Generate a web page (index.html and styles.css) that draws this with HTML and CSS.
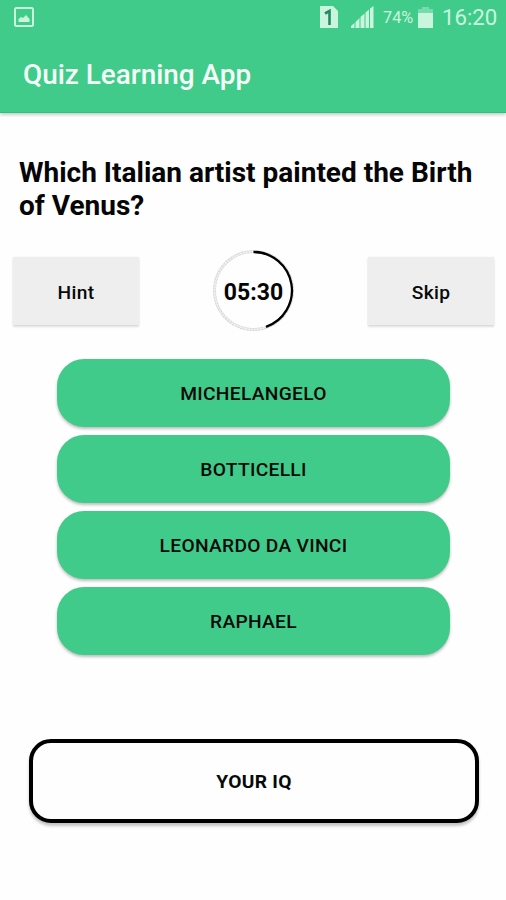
FILE: index.html
```html
<!DOCTYPE html>
<html lang="en">
<head>
<meta charset="utf-8">
<title>Quiz Learning App</title>
<link rel="stylesheet" href="styles.css">
</head>
<body>
<header class="header">
  <div class="status">
    <svg class="picture" width="20" height="20" viewBox="0 0 20 20"><rect x="1" y="1" width="18" height="18" rx="1.5" fill="none" stroke="currentColor" stroke-width="2"/><path d="M4.500 15v-3l2.500-2 2 1 3-3 3.500 4v3z" fill="currentColor"/></svg>
    <svg class="sim" width="18" height="22" viewBox="0 0 18 22"><path d="M0 0h13l5 5v17H0z" fill="currentColor"/><path d="M5 7.500 9.500 5v14" fill="none" stroke="#258963" stroke-width="2.600"/></svg>
    <svg class="signal" width="23" height="22" viewBox="0 0 23 22"><path d="M0 22v-2l3.500-3v5zM4.500 22v-6l4-4v10zM9.500 22V11l4-3.500V22zM14.500 22V6.500l3.500-3V22zM19 22V2.500L22.500 0v22z" fill="currentColor"/></svg>
    <span class="percent">74%</span>
    <svg class="battery" width="15" height="21" viewBox="0 0 15 21"><path d="M4 0h7v2h4v4H0V2h4z" fill="currentColor" opacity=".4"/><path d="M0 6h15v15H0z" fill="currentColor"/></svg>
    <span class="clock">16:20</span>
  </div>
  <h1 class="title">Quiz Learning App</h1>
</header>
<main>
  <h2 class="question">Which Italian artist painted the Birth of Venus?</h2>
  <div class="controls">
    <button class="tool">Hint</button>
    <div class="timer">
      <svg class="ring" width="82" height="82" viewBox="0 0 82 82"><circle cx="40.500" cy="40.500" r="39" fill="none" stroke="#d8d8d8" stroke-width="3" stroke-dasharray="2.500 .5"/><circle cx="40.500" cy="40.500" r="39" fill="none" stroke="#fff" stroke-width=".6"/><path d="M40.500 2A38.500 38.500 0 0 1 53 76.900" fill="none" stroke="#000" stroke-width="2.300"/></svg>
      <span class="time">05:30</span>
    </div>
    <button class="tool">Skip</button>
  </div>
  <div class="answers">
    <button class="answer">MICHELANGELO</button>
    <button class="answer">BOTTICELLI</button>
    <button class="answer">LEONARDO DA VINCI</button>
    <button class="answer">RAPHAEL</button>
  </div>
  <button class="iq">YOUR IQ</button>
</main>
</body>
</html>
```

FILE: styles.css
```css
* { box-sizing: border-box; }
body { margin: 0; height: 900px; overflow: hidden; background: #fefefe; color: #050505; font-family: Roboto, sans-serif; }
button { border: 0; padding: 0; margin: 0; color: #060a08; font: 500 19.200px/22px Roboto, sans-serif; letter-spacing: .3px; }
.header { height: 113px; background: #41cb8a; color: #f4fff8; border-bottom: 1px solid #29c47b; box-shadow: 0 2px 3px rgba(0,0,0,.2); }
.status { height: 36px; padding: 0 9px 0 14px; display: flex; align-items: center; color: #c9f5dd; white-space: nowrap; }
.picture { margin-right: auto; margin-top: -3px; }
.sim { margin-right: 13px; margin-top: -2px; }
.signal { margin-right: 9px; margin-top: -2px; }
.percent { width: 30px; margin: -1px 5px 0 0; font-size: 16.300px; }
.battery { margin-right: 9px; margin-top: -2px; }
.clock { width: 55px; margin-top: -2px; font-size: 22.200px; }
.title { margin: 0; padding: 23px 0 0 23px; font-size: 27.900px; line-height: 32px; font-weight: 500; }
.question { margin: 0; padding: 43px 19px 0; font-size: 28px; line-height: 33px; font-weight: 700; }
.controls { margin: 28px 12px 0 13px; height: 82px; display: flex; justify-content: space-between; align-items: center; }
.tool { width: 126px; height: 68px; padding-top: 3px; background: #eee; box-shadow: 0 2px 2px rgba(0,0,0,.13), 0 0 1px rgba(0,0,0,.1); }
.timer { width: 82px; height: 82px; display: grid; place-items: center; }
.ring, .time { grid-area: 1 / 1; }
.time { padding-top: 2px; font-size: 23px; font-weight: 700; }
.answers { display: grid; gap: 8px; margin: 27px 56px 0 57px; }
.answer { height: 68px; padding-top: 2px; border-radius: 27px; background: #41cb8a; box-shadow: 0 2px 3px rgba(0,0,0,.25); }
.iq { display: block; width: 450px; height: 84px; margin: 84px 0 0 29px; padding-top: 2px; border: 4px solid #000; border-radius: 22px; background: #fefefe; font-weight: 700; box-shadow: 0 3px 3px rgba(0,0,0,.23); }
```
